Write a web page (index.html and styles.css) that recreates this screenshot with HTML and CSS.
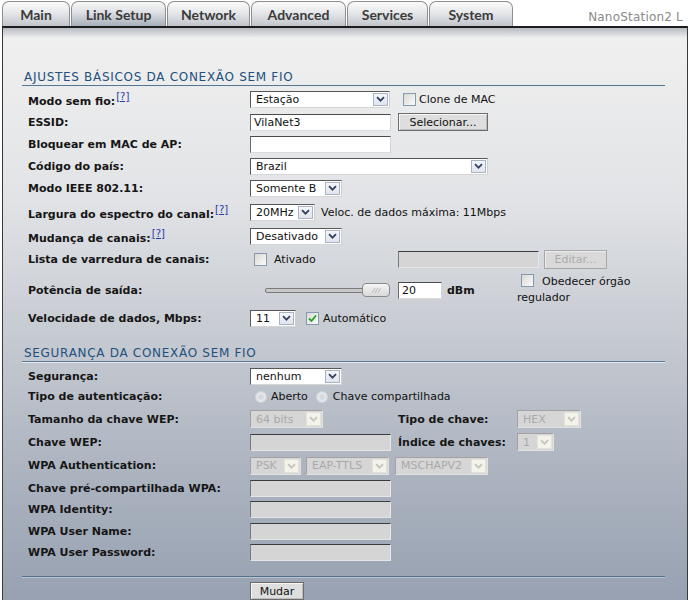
FILE: index.html
```html
<!DOCTYPE html>
<html>
<head>
<meta charset="utf-8">
<link rel="stylesheet" href="styles.css">
</head>
<body>
<div class="top">
  <div class="tabs">
    <div class="tab w-main">Main</div>
    <div class="tab active w-link">Link Setup</div>
    <div class="tab w-net">Network</div>
    <div class="tab w-adv">Advanced</div>
    <div class="tab w-srv">Services</div>
    <div class="tab w-sys">System</div>
  </div>
  <div class="brand">NanoStation2 L</div>
</div>
<div class="panel">
  <h2 class="sect s1">AJUSTES BÁSICOS DA CONEXÃO SEM FIO</h2>
  <div class="rows">
    <div class="row r1">
      <div class="lbl">Modo sem fio:<a class="help">[?]</a></div>
      <div class="c2"><span class="sel w140"><span class="val">Estação</span><span class="arr"><svg viewBox="0 0 9 6" width="9" height="6"><path d="M1 1.2L4.5 4.7L8 1.2"/></svg></span></span></div>
      <div class="c3"><span class="cb ml5"></span><span class="txt ml3">Clone de MAC</span></div>
    </div>
    <div class="row r2">
      <div class="lbl">ESSID:</div>
      <div class="c2"><span class="inp w141">VilaNet3</span></div>
      <div class="c3"><span class="btn w90">Selecionar...</span></div>
    </div>
    <div class="row r3">
      <div class="lbl">Bloquear em MAC de AP:</div>
      <div class="c2"><span class="inp w141"></span></div>
    </div>
    <div class="row r4">
      <div class="lbl">Código do país:</div>
      <div class="wide"><span class="sel w238"><span class="val">Brazil</span><span class="arr"><svg viewBox="0 0 9 6" width="9" height="6"><path d="M1 1.2L4.5 4.7L8 1.2"/></svg></span></span></div>
    </div>
    <div class="row r5">
      <div class="lbl">Modo IEEE 802.11:</div>
      <div class="wide"><span class="sel w92"><span class="val">Somente B</span><span class="arr"><svg viewBox="0 0 9 6" width="9" height="6"><path d="M1 1.2L4.5 4.7L8 1.2"/></svg></span></span></div>
    </div>
    <div class="row r6">
      <div class="lbl">Largura do espectro do canal:<a class="help">[?]</a></div>
      <div class="wide"><span class="sel w65"><span class="val">20MHz</span><span class="arr"><svg viewBox="0 0 9 6" width="9" height="6"><path d="M1 1.2L4.5 4.7L8 1.2"/></svg></span></span><span class="txt ml6">Veloc. de dados máxima: 11Mbps</span></div>
    </div>
    <div class="row r7">
      <div class="lbl">Mudança de canais:<a class="help">[?]</a></div>
      <div class="wide"><span class="sel w92"><span class="val">Desativado</span><span class="arr"><svg viewBox="0 0 9 6" width="9" height="6"><path d="M1 1.2L4.5 4.7L8 1.2"/></svg></span></span></div>
    </div>
    <div class="row r8">
      <div class="lbl">Lista de varredura de canais:</div>
      <div class="c2"><span class="cb ml4"></span><span class="txt ml7">Ativado</span></div>
      <div class="wide"><span class="inp dis w141"></span><span class="btn dis w63 ml5">Editar...</span></div>
    </div>
    <div class="row r9">
      <div class="lbl">Potência de saída:</div>
      <div class="c2"><span class="slider"><span class="track"></span><span class="thumb"><svg viewBox="0 0 28 13" width="28" height="13"><path d="M10 9L13 4M13 9L16 4M16 9L19 4"/></svg></span></span></div>
      <div class="c3"><span class="inp w44 h18">20</span><span class="bold ml5">dBm</span></div>
      <div class="c4"><span class="cb ml4 mr8"></span>Obedecer órgão regulador</div>
    </div>
    <div class="row r10">
      <div class="lbl">Velocidade de dados, Mbps:</div>
      <div class="wide"><span class="sel w46"><span class="val">11</span><span class="arr"><svg viewBox="0 0 9 6" width="9" height="6"><path d="M1 1.2L4.5 4.7L8 1.2"/></svg></span></span><span class="cb on ml10"><svg viewBox="0 0 11 11" width="11" height="11"><path d="M2 5.5L4.5 8L9 2.5"/></svg></span><span class="txt ml4">Automático</span></div>
    </div>
  </div>

  <h2 class="sect s2">SEGURANÇA DA CONEXÃO SEM FIO</h2>
  <div class="rows">
    <div class="row q1">
      <div class="lbl">Segurança:</div>
      <div class="wide"><span class="sel w92"><span class="val">nenhum</span><span class="arr"><svg viewBox="0 0 9 6" width="9" height="6"><path d="M1 1.2L4.5 4.7L8 1.2"/></svg></span></span></div>
    </div>
    <div class="row q2">
      <div class="lbl">Tipo de autenticação:</div>
      <div class="wide"><span class="rad ml5"></span><span class="txt ml4">Aberto</span><span class="rad ml8"></span><span class="txt ml5">Chave compartilhada</span></div>
    </div>
    <div class="row q3">
      <div class="lbl">Tamanho da chave WEP:</div>
      <div class="c2"><span class="sel dis w73 h18"><span class="val">64 bits</span><span class="arr"><svg viewBox="0 0 9 6" width="9" height="6"><path d="M1 1.2L4.5 4.7L8 1.2"/></svg></span></span></div>
      <div class="c3 bold">Tipo de chave:</div>
      <div class="c4"><span class="sel dis w64 h18"><span class="val">HEX</span><span class="arr"><svg viewBox="0 0 9 6" width="9" height="6"><path d="M1 1.2L4.5 4.7L8 1.2"/></svg></span></span></div>
    </div>
    <div class="row q4">
      <div class="lbl">Chave WEP:</div>
      <div class="c2"><span class="inp dis w141"></span></div>
      <div class="c3 bold">Índice de chaves:</div>
      <div class="c4"><span class="sel dis w37 h18"><span class="val">1</span><span class="arr"><svg viewBox="0 0 9 6" width="9" height="6"><path d="M1 1.2L4.5 4.7L8 1.2"/></svg></span></span></div>
    </div>
    <div class="row q5">
      <div class="lbl">WPA Authentication:</div>
      <div class="wide"><span class="sel dis w51 h18"><span class="val">PSK</span><span class="arr"><svg viewBox="0 0 9 6" width="9" height="6"><path d="M1 1.2L4.5 4.7L8 1.2"/></svg></span></span><span class="sel dis w83 h18 ml5"><span class="val">EAP-TTLS</span><span class="arr"><svg viewBox="0 0 9 6" width="9" height="6"><path d="M1 1.2L4.5 4.7L8 1.2"/></svg></span></span><span class="sel dis w93 h18 ml6"><span class="val">MSCHAPV2</span><span class="arr"><svg viewBox="0 0 9 6" width="9" height="6"><path d="M1 1.2L4.5 4.7L8 1.2"/></svg></span></span></div>
    </div>
    <div class="row q6">
      <div class="lbl">Chave pré-compartilhada WPA:</div>
      <div class="c2"><span class="inp dis w141"></span></div>
    </div>
    <div class="row q7">
      <div class="lbl">WPA Identity:</div>
      <div class="c2"><span class="inp dis w141"></span></div>
    </div>
    <div class="row q8">
      <div class="lbl">WPA User Name:</div>
      <div class="c2"><span class="inp dis w141"></span></div>
    </div>
    <div class="row q9">
      <div class="lbl">WPA User Password:</div>
      <div class="c2"><span class="inp dis w141"></span></div>
    </div>
  </div>
  <div class="sep"></div>
  <div class="actions"><span class="btn w54">Mudar</span></div>
</div>
</body>
</html>
```

FILE: styles.css
```css
* { box-sizing: border-box; }
html, body { margin: 0; padding: 0; }
body {
  width: 690px;
  height: 600px;
  overflow: hidden;
  background: #fff;
  font-family: "DejaVu Sans", Verdana, sans-serif;
  font-size: 11px;
  color: #111;
}

/* tabs */
.top { display: flex; height: 26px; align-items: flex-end; }
.tabs { display: flex; gap: 1px; margin-left: 2px; height: 25px; }
.tab {
  height: 25px;
  border: 1px solid #8e8e8e;
  border-bottom: none;
  border-radius: 7px 7px 0 0;
  background: linear-gradient(#fbfbfb, #e5e7ea 45%, #c1c5cb);
  font-family: Lato, "Open Sans", sans-serif;
  font-weight: 700;
  font-size: 14px;
  color: #3b3b3b;
  display: flex;
  align-items: center;
  justify-content: center;
  padding-top: 1px;
}
.tab.active { background: linear-gradient(#f8f8f8, #dcdfe3 45%, #a7afbb); }
.w-main { width: 68px; }
.w-link { width: 95px; }
.w-net { width: 83px; }
.w-adv { width: 95px; }
.w-srv { width: 81px; }
.w-sys { width: 84px; }
.brand {
  margin-left: auto;
  margin-right: 7px;
  align-self: center;
  padding-top: 7px;
  font-size: 12px;
  letter-spacing: 0.2px;
  color: #8a8a8a;
}

/* panel */
.panel {
  margin-left: 2px;
  width: 686px;
  height: 574px;
  border: 1px solid #3a3a3a;
  border-top: 2px solid #1c1c1c;
  border-bottom: none;
  padding-left: 19px;
  background:
    linear-gradient(#b6bac1 0, rgba(238,238,238,0) 10px),
    linear-gradient(#efefef 0, #eeeeee 6%, #e1e3e6 30%, #c7cbd2 53%, #aeb5c1 76%, #97a1b1 100%);
}
.sect {
  margin: 0;
  width: 643px;
  height: 16px;
  padding-left: 2px;
  font-size: 12px;
  line-height: 15px;
  font-weight: normal;
  letter-spacing: 0.7px;
  color: #22507e;
  border-bottom: 1px solid #57768f;
  box-shadow: 0 1px 0 #e4ecf2;
}
.s1 { margin-top: 42px; }
.s2 { margin-top: 18px; }
.rows { padding-left: 6px; }
.s1 + .rows { margin-top: 2px; }
.s2 + .rows { margin-top: 4px; }
.row { display: flex; align-items: center; }
.r1 { height: 22px; }
.r2 { height: 24px; }
.r3 { height: 20px; }
.r4 { height: 24px; }
.r5 { height: 20px; }
.r6 { height: 28px; }
.r7 { height: 20px; }
.r8 { height: 26px; }
.r9 { height: 36px; }
.r10 { height: 20px; }
.q1 { height: 20px; }
.q2 { height: 21px; }
.q3 { height: 24px; }
.q4 { height: 22px; }
.q5 { height: 25px; }
.q6 { height: 20px; }
.q7 { height: 22px; }
.q8 { height: 22px; }
.q9 { height: 20px; }

.lbl { width: 222px; flex: none; font-weight: bold; white-space: nowrap; color: #161616; }
.c2 { width: 148px; flex: none; display: flex; align-items: center; white-space: nowrap; }
.c3 { width: 119px; flex: none; display: flex; align-items: center; white-space: nowrap; }
.c4 { flex: none; display: flex; align-items: center; }
.wide { flex: none; display: flex; align-items: center; white-space: nowrap; }
.r9 .c4 { display: block; width: 122px; line-height: 16px; }
.r9 .c4 .cb { display: inline-block; vertical-align: -2px; }
.bold { font-weight: bold; color: #161616; }

.help {
  font-size: 10px;
  font-weight: normal;
  color: #2a3aa8;
  text-decoration: underline;
  vertical-align: 5px;
  margin-left: 1px;
}

/* controls */
.sel {
  display: inline-flex;
  align-items: center;
  height: 17px;
  border: 1px solid;
  border-color: #575757 #cfcfcf #d6d6d6 #575757;
  background: #fff;
  flex: none;
}
.sel .val { flex: 1; padding-left: 5px; overflow: hidden; white-space: nowrap; }
.sel .arr {
  width: 15px;
  height: 13px;
  margin-right: 1px;
  border: 1px solid #a9b3c4;
  background: linear-gradient(#f4f6fa, #dfe4ee);
  display: flex;
  align-items: center;
  justify-content: center;
  flex: none;
}
.sel svg path { fill: none; stroke: #34415e; stroke-width: 1.8; }
.sel.dis { background: #d6d6d6; color: #a9a9a9; border-color: #a2a2a2 #e2e2e2 #e2e2e2 #a2a2a2; }
.sel.dis .arr { background: #f3f3ea; border-color: #e3e3dc; }
.sel.dis svg path { stroke: #c4c4c0; }
.h18 { height: 18px; }
.h18 .arr { height: 14px; }

.inp {
  display: inline-flex;
  align-items: center;
  height: 17px;
  padding-left: 3px;
  border: 1px solid;
  border-color: #4a4a4a #d4d4d4 #dcdcdc #6a6a6a;
  background: #fff;
  flex: none;
}
.inp.dis { background: #d5d5d5; border-color: #3c3c3c #e6e6e6 #e6e6e6 #7a7a7a; }

.btn {
  display: inline-flex;
  align-items: center;
  justify-content: center;
  height: 18px;
  border: 1px solid #6c6c6c;
  background: #dedede;
  box-shadow: inset 1px 1px 0 #f6f6f6, inset -1px -1px 0 #bdbdbd;
  color: #111;
  flex: none;
}
.btn.dis { color: #ababab; border-color: #a8a8a8; background: #d9d9d9; box-shadow: inset 1px 1px 0 #ececec; height: 19px; }

.cb {
  display: inline-flex;
  align-items: center;
  justify-content: center;
  width: 13px;
  height: 13px;
  border: 1px solid #8799ae;
  background: linear-gradient(135deg, #d9d9d3, #fbfbfb);
  flex: none;
}
.cb svg path { fill: none; stroke: #21a121; stroke-width: 1.8; }

.rad {
  display: inline-block;
  width: 12px;
  height: 12px;
  border-radius: 50%;
  border: 1px solid #d2d6dc;
  background: radial-gradient(circle at 50% 50%, #d6d9de 0, #d6d9de 35%, #e2e5e9 40%);
  flex: none;
}

.slider { display: flex; align-items: center; margin-left: 15px; }
.track {
  width: 105px;
  height: 5px;
  border: 1px solid #7a7a7a;
  border-radius: 2px;
  background: #c9c9c9;
}
.thumb {
  width: 28px;
  height: 14px;
  margin-left: -8px;
  border: 1px solid #8a8a8a;
  border-radius: 4px;
  background: linear-gradient(#f4f4f4, #dadada);
  display: flex;
}
.thumb svg path { fill: none; stroke: #b4b4b4; stroke-width: 1; }

.sep {
  width: 643px;
  margin-top: 14px;
  border-top: 1px solid #55708a;
  box-shadow: 0 1px 0 #b9c3d0;
}
.actions { margin-top: 5px; padding-left: 228px; }

.txt { color: #111; }
.w37 { width: 37px; } .w44 { width: 44px; } .w46 { width: 46px; } .w51 { width: 51px; }
.w54 { width: 54px; } .w63 { width: 63px; } .w64 { width: 64px; } .w65 { width: 65px; }
.w73 { width: 73px; } .w83 { width: 83px; } .w90 { width: 90px; } .w92 { width: 92px; }
.w93 { width: 93px; } .w140 { width: 140px; } .w141 { width: 141px; } .w238 { width: 238px; }
.ml3 { margin-left: 3px; } .ml4 { margin-left: 4px; } .ml5 { margin-left: 5px; }
.ml6 { margin-left: 6px; } .ml7 { margin-left: 7px; } .ml8 { margin-left: 8px; }
.ml10 { margin-left: 10px; } .mr8 { margin-right: 8px; }
```
